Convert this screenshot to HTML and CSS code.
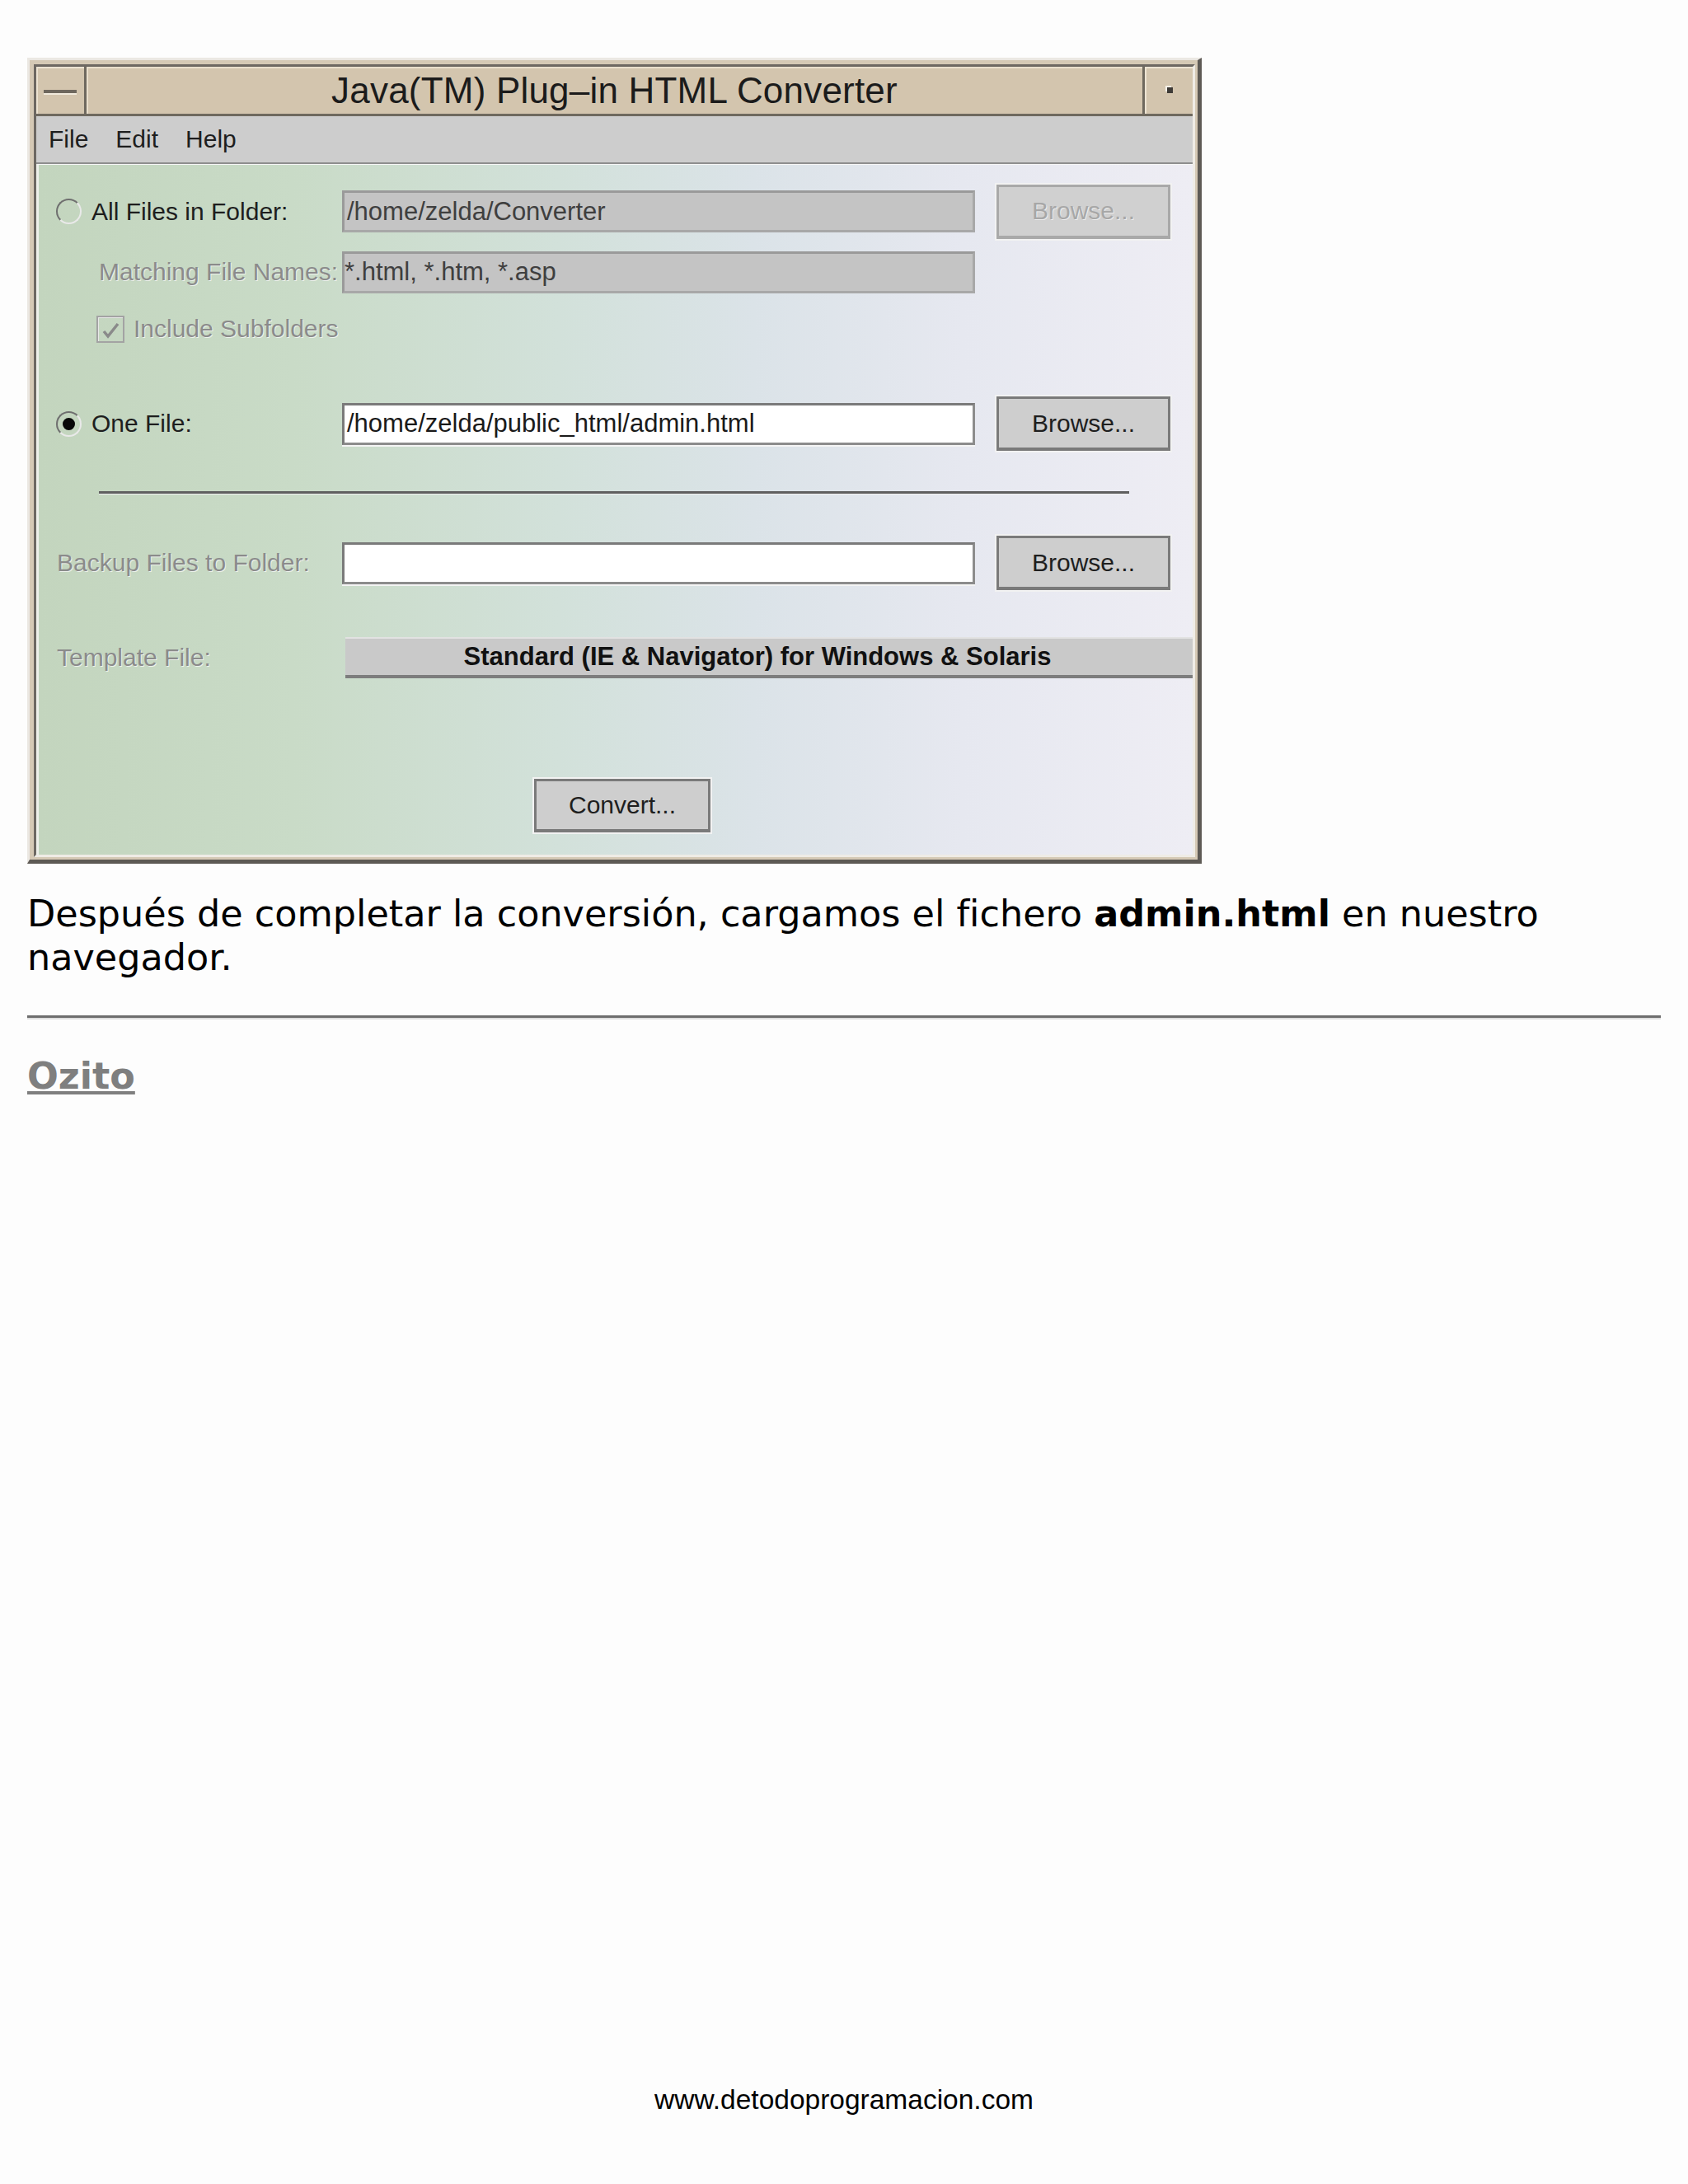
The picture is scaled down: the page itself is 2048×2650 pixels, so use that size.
FILE: index.html
```html
<!DOCTYPE html>
<html lang="es">
<head>
<meta charset="utf-8">
<title>Java(TM) Plug-in HTML Converter</title>
<link rel="stylesheet" href="styles.css">
</head>
<body>
<div class="page">
  <div class="window">
    <div class="frame">
      <div class="titlebar">
        <div class="tb-btn tb-min"><span class="min-glyph"></span></div>
        <div class="tb-title">Java(TM) Plug–in HTML Converter</div>
        <div class="tb-btn tb-max"><span class="max-glyph"></span></div>
      </div>
      <div class="menubar">
        <span class="menu">File</span>
        <span class="menu">Edit</span>
        <span class="menu">Help</span>
      </div>
      <div class="content">
        <div class="row r1">
          <div class="lab"><span class="radio"></span><span>All Files in Folder:</span></div>
          <div class="field disabled">/home/zelda/Converter</div>
          <div></div>
          <div class="btn disabled">Browse...</div>
        </div>
        <div class="row r2">
          <div class="lab off ind2">Matching File Names:</div>
          <div class="field disabled tight">*.html, *.htm, *.asp</div>
        </div>
        <div class="row r3">
          <div class="lab off ind3">
            <span class="check"><svg width="29" height="29" viewBox="0 0 29 29"><path d="M6 17 L11 23 L23 8" fill="none" stroke="#8a8a8a" stroke-width="3.5"/></svg></span>
            <span>Include Subfolders</span>
          </div>
        </div>
        <div class="row r4">
          <div class="lab"><span class="radio on"></span><span>One File:</span></div>
          <div class="field white">/home/zelda/public_html/admin.html</div>
          <div></div>
          <div class="btn">Browse...</div>
        </div>
        <div class="sep"></div>
        <div class="row r5">
          <div class="lab off ind1">Backup Files to Folder:</div>
          <div class="field white"></div>
          <div></div>
          <div class="btn">Browse...</div>
        </div>
        <div class="row r6">
          <div class="lab off ind1">Template File:</div>
          <div class="combo">Standard (IE &amp; Navigator) for Windows &amp; Solaris</div>
        </div>
        <div class="convert-row">
          <div class="btn convert">Convert...</div>
        </div>
      </div>
    </div>
  </div>

  <p class="para"><span>Después de completar la conversión, cargamos el fichero </span><b>admin.html</b><span> en nuestro</span><br><span>navegador.</span></p>
  <hr class="rule">
  <p class="sig"><a href="#">Ozito</a></p>

  <div class="footer">www.detodoprogramacion.com</div>
</div>
</body>
</html>
```

FILE: styles.css
```css
* { box-sizing: border-box; }
html, body { margin: 0; background: #fdfdfd; }

.page {
  height: 2650px;
  padding: 70px 33px 0;
  display: flex;
  flex-direction: column;
  font-family: "DejaVu Sans", Verdana, sans-serif;
  color: #000;
  overflow: hidden;
}

/* ---------- window ---------- */
.window {
  flex: none;
  width: 1425px;
  height: 978px;
  border: 3px solid;
  border-color: #ebe8e3 #5e5a55 #5e5a55 #ebe8e3;
  border-right-width: 5px;
  border-bottom-width: 5px;
  background: #d5c9b5;
  padding: 5px 3px 3px 5px;
}
.frame {
  height: 100%;
  border: 3px solid;
  border-color: #6d6862 #efece6 #efece6 #6d6862;
  display: flex;
  flex-direction: column;
  font-family: "Liberation Sans", Arial, sans-serif;
}

.titlebar {
  flex: none;
  height: 60px;
  display: flex;
  background: #d3c5ae;
  border-bottom: 3px solid #6f695f;
}
.tb-btn {
  flex: none;
  display: flex;
  align-items: center;
  justify-content: center;
  box-shadow: inset 2px 2px 0 #ece3d2;
}
.tb-min { width: 61px; border-right: 3px solid #6f695f; }
.tb-max { width: 61px; border-left: 3px solid #6f695f; }
.min-glyph {
  display: block;
  width: 40px;
  height: 4px;
  background: #6e685e;
  box-shadow: 0 2px 0 #f1eadd;
  margin-top: 2px;
}
.max-glyph {
  display: block;
  width: 7px;
  height: 7px;
  background: #3e3b37;
  box-shadow: -2px -2px 0 #f6f1e8;
  margin-left: 2px;
}
.tb-title {
  flex: 1;
  text-align: center;
  font-size: 44px;
  line-height: 57px;
  letter-spacing: 0.2px;
  color: #1b1b1b;
  box-shadow: inset 2px 2px 0 #e9dfcc;
}

.menubar {
  flex: none;
  height: 58px;
  display: flex;
  align-items: center;
  gap: 33px;
  padding-left: 15px;
  background: #cdcdcd;
  border-bottom: 2px solid #8e8e8e;
  font-size: 30px;
  color: #1e1e1e;
}

.content {
  flex: 1;
  border-top: 1px solid #f6f6f6;
  border-left: 3px solid #eef0ea;
  padding-left: 21px;
  background: linear-gradient(90deg, #c3d5be 0%, #c9dbc7 22%, #d2e1da 45%, #dbe3e8 62%, #e6e8f0 80%, #eeedf4 100%);
}

.row {
  display: grid;
  grid-template-columns: 347px 768px 26px 211px 1fr;
  align-items: center;
}
.r1 { margin-top: 23px; height: 67px; }
.r2 { margin-top: 14px; height: 52px; }
.r3 { margin-top: 25px; height: 36px; }
.r4 { margin-top: 64px; height: 66px; }
.r5 { margin-top: 50px; height: 65px; }
.r6 { margin-top: 58px; height: 50px; }

.lab {
  display: flex;
  align-items: center;
  white-space: nowrap;
  font-size: 30px;
  color: #1e1e1e;
}
.lab.off {
  color: #8b8b8b;
  text-shadow: 1px 1px 0 rgba(255, 255, 255, 0.7);
}
.ind1 { padding-left: 1px; }
.ind2 { padding-left: 52px; }
.ind3 { padding-left: 49px; }

.radio {
  flex: none;
  width: 31px;
  height: 31px;
  margin-right: 12px;
  border-radius: 50%;
  border: 2px solid;
  border-color: #6f6f6f #e9e9e9 #e9e9e9 #6f6f6f;
  display: flex;
  align-items: center;
  justify-content: center;
}
.radio.on::after {
  content: "";
  width: 15px;
  height: 15px;
  border-radius: 50%;
  background: #080808;
}

.check {
  flex: none;
  width: 34px;
  height: 33px;
  margin-right: 11px;
  border: 2px solid #a3a3a3;
  box-shadow: inset 1px 1px 0 #e8e8e8;
  display: flex;
  align-items: center;
  justify-content: center;
}

.field {
  height: 51px;
  display: flex;
  align-items: center;
  padding-left: 3px;
  white-space: nowrap;
  overflow: hidden;
  font-size: 31px;
  border: 3px solid;
}
.field.tight { padding-left: 0; }
.field.disabled {
  background: #c4c4c4;
  border-color: #9a9a9a #a8a8a8 #a8a8a8 #9a9a9a;
  color: #3f3f3f;
}
.field.white {
  background: #ffffff;
  border-color: #7a7a7a #8c8c8c #8c8c8c #7a7a7a;
  box-shadow: 0 2px 0 #f4f4f4;
  color: #1a1a1a;
}

.btn {
  height: 66px;
  display: flex;
  align-items: center;
  justify-content: center;
  background: #cecece;
  border: 3px solid #7a7a7a;
  border-bottom-width: 4px;
  box-shadow: 0 0 0 2px #f2f2f2;
  font-size: 30px;
  color: #1e1e1e;
}
.btn.disabled {
  background: #d0d0d0;
  border-color: #a9a9a9;
  color: #a7a7a7;
  text-shadow: 1px 1px 0 #ededed;
}

.sep {
  margin: 49px 0 0 52px;
  width: 1250px;
  height: 0;
  border-top: 3px solid #5f5f5f;
  border-bottom: 1px solid #f0f0f0;
}

.combo {
  grid-column: 2 / -1;
  margin-left: 4px;
  height: 50px;
  display: flex;
  align-items: center;
  justify-content: center;
  padding-right: 28px;
  background: #c9c9c9;
  border-top: 2px solid #e2e2e2;
  border-bottom: 4px solid #7d7d7d;
  font-size: 31px;
  font-weight: bold;
  color: #111;
  white-space: nowrap;
}

.convert-row { margin-top: 122px; padding-left: 580px; }
.btn.convert { width: 214px; height: 65px; }

/* ---------- page text ---------- */
.para {
  margin: 34px 0 0;
  font-size: 44.5px;
  line-height: 53px;
}
.rule {
  margin: 44px 0 0;
  height: 0;
  border: 0;
  border-top: 3px solid #6e6e6e;
  border-bottom: 2px solid #dedede;
}
.sig {
  margin: 42px 0 0;
  font-size: 44.5px;
  font-weight: bold;
  line-height: 53px;
}
.sig a { color: #7f7f7f; text-decoration: underline; }

.footer {
  margin-top: auto;
  margin-bottom: 83px;
  text-align: center;
  font-family: "Liberation Sans", Arial, sans-serif;
  font-size: 33.5px;
  line-height: 38px;
  color: #000;
}
```
